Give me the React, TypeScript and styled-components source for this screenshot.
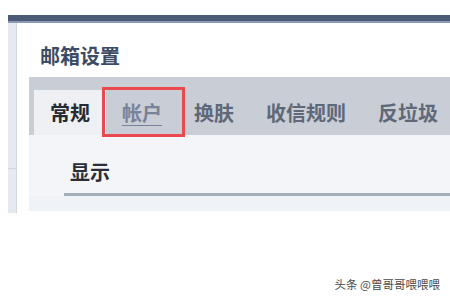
import React from "react";
import styled, { createGlobalStyle } from "styled-components";

const Global = createGlobalStyle`
  html, body { margin: 0; padding: 0; background: #ffffff; }
  body { width: 450px; height: 300px; overflow: hidden;
    font-family: "Noto Sans CJK SC", "Noto Sans", sans-serif; }
`;

const Page = styled.div`
  width: 450px;
  height: 300px;
  box-sizing: border-box;
  padding: 15px 0 0 8px;
  display: flex;
  flex-direction: column;
`;

const TopBar = styled.div`
  height: 6px;
  background: #4b5b76;
  border-bottom: 2px solid #8c9bb1;
`;

const Main = styled.div`
  display: flex;
  height: 190px;
`;

const LeftStrip = styled.div`
  width: 8px;
  display: flex;
  flex-direction: column;
  border-right: 1px solid #d2d9e1;
`;

const StripPart = styled.div<{ $h?: number }>`
  background: #e5eaf0;
  ${(p) => (p.$h ? `height: ${p.$h}px; border-bottom: 1px solid #cfd6de;` : `flex: 1;`)}
`;

const Panel = styled.div`
  flex: 1;
  display: flex;
  flex-direction: column;
  padding-left: 12px;
  min-width: 0;
`;

const Title = styled.div`
  padding: 21px 0 0 11px;
  height: 24px;
  line-height: 24px;
  margin-bottom: 9px;
  font-size: 20px;
  font-weight: 700;
  color: #3b4b66;
  white-space: nowrap;
`;

const TabBar = styled.div`
  height: 58px;
  background: #c9cdd5;
  display: flex;
  align-items: flex-end;
  padding-left: 5px;
  white-space: nowrap;
`;

const Tab = styled.div<{ $active?: boolean; $marked?: boolean }>`
  position: relative;
  height: 45px;
  padding: 0 16px;
  display: flex;
  align-items: center;
  font-size: 20px;
  font-weight: 700;
  color: ${(p) => (p.$active ? "#262a33" : p.$marked ? "#78829a" : "#5f6878")};
  background: ${(p) => (p.$active ? "#eef0f4" : "transparent")};
  text-decoration: ${(p) => (p.$marked ? "underline" : "none")};
  text-underline-offset: 4px;
  text-decoration-thickness: 1px;
  flex-shrink: 0;
  ${(p) =>
    p.$marked
      ? `&::after {
    content: "";
    position: absolute;
    left: -4px;
    right: -7px;
    top: -3px;
    bottom: -2px;
    border: 3px solid #ea4a4c;
    box-sizing: border-box;
  }`
      : ""}
`;

const Content = styled.div`
  height: 76px;
  background: #f3f5f8;
  padding: 25px 0 0 35px;
  box-sizing: border-box;
  display: flex;
  flex-direction: column;
`;

const SectionHead = styled.div`
  padding-left: 6px;
  height: 24px;
  line-height: 24px;
  font-size: 20px;
  font-weight: 700;
  color: #2a2e36;
  border-bottom: 3px solid #a4aeb8;
  padding-bottom: 9px;
`;

const SectionBelow = styled.div`
  flex: 1;
  background: #eff3f8;
  margin-left: -35px;
`;

const Footer = styled.div`
  flex: 1;
  display: flex;
  justify-content: flex-end;
  align-items: flex-end;
  padding: 0 10px 9px 0;
  font-size: 11.5px;
  line-height: 14px;
  color: #4a4a4a;
  white-space: nowrap;
`;

export default function App() {
  return (
    <>
      <Global />
      <Page>
        <TopBar />
        <Main>
          <LeftStrip>
            <StripPart $h={145} />
            <StripPart />
          </LeftStrip>
          <Panel>
            <Title>邮箱设置</Title>
            <TabBar>
              <Tab $active>常规</Tab>
              <Tab $marked>帐户</Tab>
              <Tab>换肤</Tab>
              <Tab>收信规则</Tab>
              <Tab>反垃圾</Tab>
            </TabBar>
            <Content>
              <SectionHead>显示</SectionHead>
              <SectionBelow />
            </Content>
          </Panel>
        </Main>
        <Footer>头条 @曾哥哥喂喂喂</Footer>
      </Page>
    </>
  );
}
